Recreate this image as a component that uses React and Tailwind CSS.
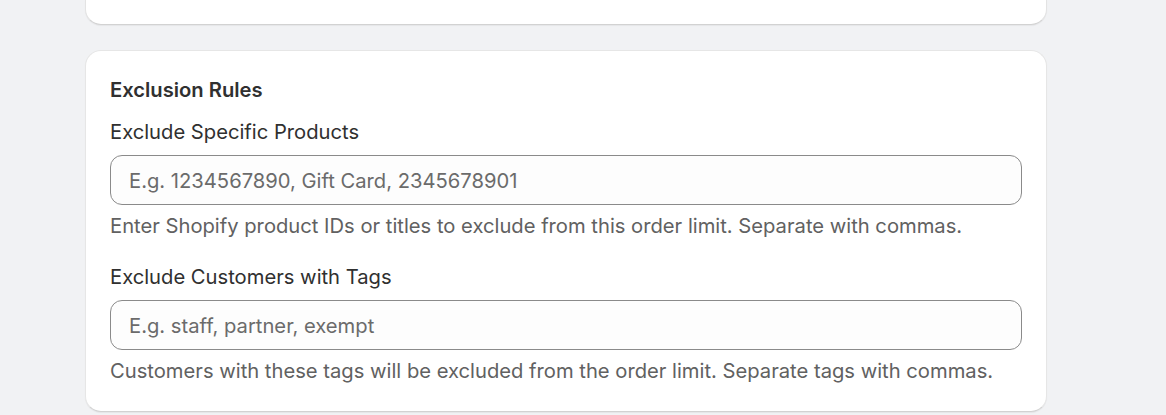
export default function App() {
    const fields = [
        {
            label: 'Exclude Specific Products',
            placeholder: 'E.g. 1234567890, Gift Card, 2345678901',
            help: 'Enter Shopify product IDs or titles to exclude from this order limit. Separate with commas.',
        },
        {
            label: 'Exclude Customers with Tags',
            placeholder: 'E.g. staff, partner, exempt',
            help: 'Customers with these tags will be excluded from the order limit. Separate tags with commas.',
        },
    ];

    return (
        <div className="min-h-[415px] bg-[#f1f2f4] pl-[85px] font-['Inter',sans-serif] text-[#303030]">
            <div className="w-[962px]">
                {/* bottom of previous card */}
                <div className="h-[25px] rounded-b-[16px] border-x border-b border-[#e3e3e3] border-b-[#d2d2d2] bg-white shadow-[0_1px_1px_rgba(0,0,0,0.05)]" />

                {/* Exclusion rules card */}
                <div className="mt-[25px] rounded-[16px] border border-[#e6e6e6] border-b-[#d2d2d2] bg-white px-[24px] pt-[27px] pb-[28px] shadow-[0_1px_1px_rgba(0,0,0,0.05)]">
                    <h2 className="text-[20.2px] leading-[24px] font-semibold">Exclusion Rules</h2>

                    {fields.map((field, i) => (
                        <div key={field.label} className={i === 0 ? 'mt-[18px]' : 'mt-[27px]'}>
                            <label className="block text-[20.2px] leading-[24px]">{field.label}</label>
                            <input
                                type="text"
                                placeholder={field.placeholder}
                                className="mt-[11px] block h-[50px] w-full rounded-[12px] border border-[#8a8a8a] bg-[#fdfdfd] px-[18px] text-[20.2px] text-[#303030] outline-none placeholder:text-[#6b6b6b]"
                            />
                            <p className="mt-[9px] text-[20.2px] leading-[24px] text-[#616161]">{field.help}</p>
                        </div>
                    ))}
                </div>
            </div>
        </div>
    );
}
